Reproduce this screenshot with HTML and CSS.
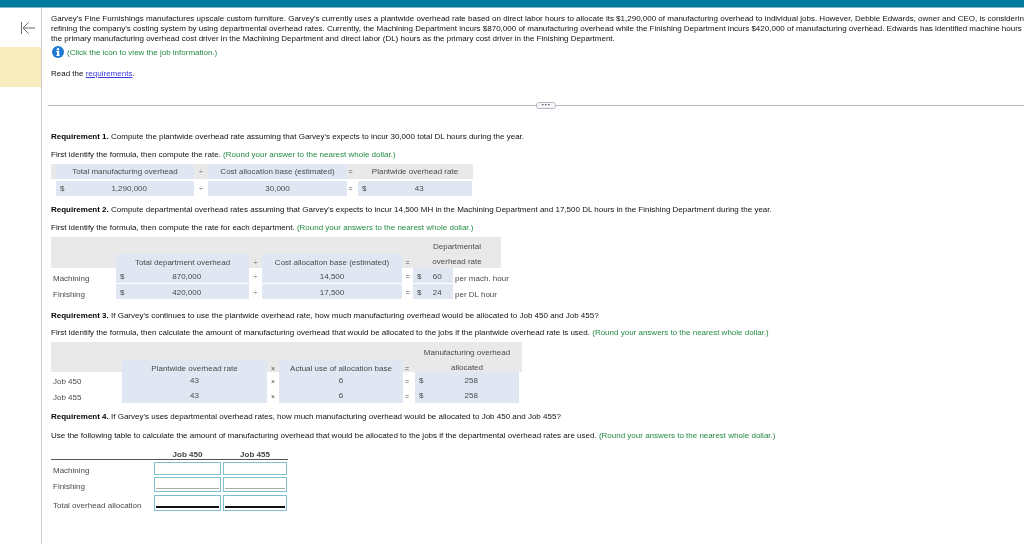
FILE: index.html
```html
<!DOCTYPE html>
<html lang="en">
<head>
<meta charset="utf-8">
<title>Garvey's Fine Furnishings</title>
<link rel="stylesheet" href="styles.css">
</head>
<body>
<div class="topbar"></div>
<div class="shell">
  <aside class="side">
    <svg class="back" width="16" height="14" viewBox="0 0 16 14"><path d="M1.500 1v12M15 7H3M8.500 1.500 3 7l5.500 5.500" fill="none" stroke="#6a6a6a" stroke-width="1"/></svg>
    <div class="flag"></div>
  </aside>
  <main class="main">
    <section class="intro">
      <div class="line">Garvey's Fine Furnishings manufactures upscale custom furniture. Garvey's currently uses a plantwide overhead rate based on direct labor hours to allocate its $1,290,000 of manufacturing overhead to individual jobs. However, Debbie Edwards, owner and CEO, is considering</div>
      <div class="line">refining the company's costing system by using departmental overhead rates. Currently, the Machining Department incurs $870,000 of manufacturing overhead while the Finishing Department incurs $420,000 of manufacturing overhead. Edwards has identified machine hours as</div>
      <div class="line">the primary manufacturing overhead cost driver in the Machining Department and direct labor (DL) hours as the primary cost driver in the Finishing Department.</div>
      <div class="info">
        <svg width="12" height="12" viewBox="0 0 12 12"><circle cx="6" cy="6" r="6" fill="#1f78d1"/><rect x="5" y="5" width="2.200" height="4.600" fill="#fff"/><rect x="4.200" y="5" width="1.500" height="1" fill="#fff"/><rect x="4.200" y="8.800" width="3.800" height="1" fill="#fff"/><circle cx="6" cy="3.200" r="1.200" fill="#fff"/></svg>
        <span class="hint">(Click the icon to view the job information.)</span>
      </div>
      <div class="line read">Read the <a class="link" href="#">requirements</a>.</div>
    </section>
    <div class="divider"><span class="pill">···</span></div>

    <p class="para p1"><b>Requirement 1.</b> Compute the plantwide overhead rate assuming that Garvey's expects to incur 30,000 total DL hours during the year.</p>
    <p class="para p-first">First identify the formula, then compute the rate. <span class="hint">(Round your answer to the nearest whole dollar.)</span></p>
    <div class="table t1">
      <div class="row gray r-h1">
        <span></span><span class="cell blue">Total manufacturing overhead</span><span class="cell op">÷</span><span class="cell blue">Cost allocation base (estimated)</span><span class="cell op">=</span><span class="cell">Plantwide overhead rate</span><span></span>
      </div>
      <div class="row r-b1">
        <span></span><span class="cell blue money"><i>$</i><em>1,290,000</em></span><span class="cell op">÷</span><span class="cell blue">30,000</span><span class="cell op">=</span><span class="cell blue money"><i>$</i><em>43</em></span><span></span>
      </div>
    </div>

    <p class="para p2"><b>Requirement 2.</b> Compute departmental overhead rates assuming that Garvey's expects to incur 14,500 MH in the Machining Department and 17,500 DL hours in the Finishing Department during the year.</p>
    <p class="para p-first">First identify the formula, then compute the rate for each department. <span class="hint">(Round your answers to the nearest whole dollar.)</span></p>
    <div class="table t2">
      <div class="row gray tall">
        <span></span><span class="cell blue end">Total department overhead</span><span class="cell op end">÷</span><span class="cell blue end">Cost allocation base (estimated)</span><span class="cell op end">=</span><span class="cell two">Departmental<br>overhead rate</span>
      </div>
      <div class="row r-b2">
        <span class="cell label">Machining</span><span class="cell blue money"><i>$</i><em>870,000</em></span><span class="cell op">÷</span><span class="cell blue">14,500</span><span class="cell op">=</span><span class="cell blue money"><i>$</i><em>60</em></span><span class="cell note">per mach. hour</span>
      </div>
      <div class="row r-b2">
        <span class="cell label">Finishing</span><span class="cell blue money"><i>$</i><em>420,000</em></span><span class="cell op">÷</span><span class="cell blue">17,500</span><span class="cell op">=</span><span class="cell blue money"><i>$</i><em>24</em></span><span class="cell note">per DL hour</span>
      </div>
    </div>

    <p class="para p3"><b>Requirement 3.</b> If Garvey's continues to use the plantwide overhead rate, how much manufacturing overhead would be allocated to Job 450 and Job 455?</p>
    <p class="para p-first3">First identify the formula, then calculate the amount of manufacturing overhead that would be allocated to the jobs if the plantwide overhead rate is used. <span class="hint">(Round your answers to the nearest whole dollar.)</span></p>
    <div class="table t3">
      <div class="row gray tall3">
        <span></span><span class="cell blue end">Plantwide overhead rate</span><span class="cell op end">×</span><span class="cell blue end">Actual use of allocation base</span><span class="cell op end">=</span><span class="cell two">Manufacturing overhead<br>allocated</span><span></span>
      </div>
      <div class="row r-b3">
        <span class="cell label">Job 450</span><span class="cell blue">43</span><span class="cell op">×</span><span class="cell blue">6</span><span class="cell op">=</span><span class="cell blue money"><i>$</i><em>258</em></span><span></span>
      </div>
      <div class="row r-b3">
        <span class="cell label">Job 455</span><span class="cell blue">43</span><span class="cell op">×</span><span class="cell blue">6</span><span class="cell op">=</span><span class="cell blue money"><i>$</i><em>258</em></span><span></span>
      </div>
    </div>

    <p class="para p4"><b>Requirement 4.</b> If Garvey's uses departmental overhead rates, how much manufacturing overhead would be allocated to Job 450 and Job 455?</p>
    <p class="para p-first4">Use the following table to calculate the amount of manufacturing overhead that would be allocated to the jobs if the departmental overhead rates are used. <span class="hint">(Round your answers to the nearest whole dollar.)</span></p>
    <div class="table t4">
      <div class="row4 head4"><span></span><b>Job 450</b><b>Job 455</b></div>
      <div class="row4 first4">
        <span class="cell label">Machining</span><span class="box"></span><span class="box"></span>
      </div>
      <div class="row4 second4">
        <span class="cell label">Finishing</span><span class="box single"></span><span class="box single"></span>
      </div>
      <div class="row4 third4">
        <span class="cell label">Total overhead allocation</span><span class="box total"></span><span class="box total"></span>
      </div>
    </div>
  </main>
</div>
</body>
</html>
```
FILE: styles.css
```css
* { box-sizing: border-box; }
html, body { margin: 0; height: 100%; overflow: hidden; background: #fff; }
body {
  font-family: "Liberation Sans", Arial, sans-serif;
  font-size: 8px;
  color: #111;
  display: flex;
  flex-direction: column;
}
.topbar { height: 8px; flex: none; background: #007a9e; border-bottom: 1px solid #7fb8cc; }
.shell { flex: 1; display: flex; min-height: 0; }
.side { width: 42px; flex: none; border-right: 1px solid #ccc; display: flex; flex-direction: column; }
.back { margin: 13px 0 0 20px; display: block; }
.flag { margin-top: 12px; height: 40px; background: #f9ecbd; }
.main { flex: 1; min-width: 0; padding: 6px 0 0 9px; overflow: hidden; filter: blur(0.3px); }
.intro { height: 91px; }
.line { white-space: nowrap; line-height: 10px; }
.info { display: flex; align-items: center; gap: 3px; margin: 2px 0 0 1px; height: 12px; }
.hint { color: #238a45; white-space: nowrap; }
.read { margin-top: 11px; }
.link { color: #3a3ae0; }
.divider { margin-left: -3px; height: 1px; background: #b9b9c6; position: relative; }
.pill {
  position: absolute; left: 488px; top: -3px; width: 20px; height: 7px;
  border: 1px solid #b9b9c6; border-radius: 3px; background: #f5f7f9;
  font-size: 9px; font-weight: bold; line-height: 4px; text-align: center; color: #444;
}
.para { margin: 0; white-space: nowrap; line-height: 10px; }
.para b { color: #000; }
.p1 { margin-top: 26px; }
.p-first { margin-top: 8px; }
.p2 { margin-top: 9px; }
.p3 { margin-top: 11px; }
.p-first3 { margin-top: 7px; }
.p4 { margin-top: 9px; }
.p-first4 { margin-top: 9px; }
.table { color: #4a4a4a; }
.row { display: grid; }
.cell { display: flex; align-items: center; justify-content: center; white-space: nowrap; }
.gray { background: #e9e9e9; }
.blue { background: #e1e7f2; }
.op { font-size: 7px; }
.end { align-self: end; height: 15px; padding-top: 1px; }
.money { justify-content: flex-start; padding-left: 4px; }
.money i { font-style: normal; }
.money em { font-style: normal; flex: 1; text-align: center; }
.label { justify-content: flex-start; padding: 4px 0 0 2px; }
.note { justify-content: flex-start; padding: 4px 0 0 2px; }
.two { display: block; text-align: center; line-height: 15px; padding-top: 2px; }
.t1 { width: 422px; margin-top: 4px; }
.t1 .row { grid-template-columns: 5px 138px 14px 139px 11px 114px 1px; }
.t1 .cell:nth-child(5), .t3 .cell:nth-child(5) { padding-right: 4px; }
.r-h1 { height: 15px; margin-bottom: 2px; }
.r-b1 { height: 15px; }
.t2 { width: 450px; margin-top: 4px; }
.t2 .row { grid-template-columns: 65px 133px 13px 140px 11px 40px 48px; }
.t2 .two { grid-column: span 2; }
.tall { height: 31px; }
.r-b2 { height: 16px; }
.r-b2 .blue { margin-bottom: 1px; padding-top: 1px; }
.t3 { width: 471px; margin-top: 4px; }
.t3 .row { grid-template-columns: 71px 145px 12px 124px 12px 104px 3px; }
.t3 .two { padding-top: 3px; }
.tall3 { height: 30px; }
.r-b3 { height: 15.5px; }
.r-b3 .blue { padding-top: 1px; }
.r-b3 .op { padding-top: 3px; }
.t4 { margin-top: 5px; width: 237px; }
.row4 { display: grid; grid-template-columns: 101px 67px 64px; column-gap: 2px; }
.row4 b { text-align: center; color: #444; }
.head4 { height: 14px; border-bottom: 1px solid #555; line-height: 8px; margin-bottom: 2px; align-items: end; }
.box { display: block; border: 1px solid #7fc0d0; background: #fff; }
.first4 { height: 13px; margin-bottom: 2px; }
.second4 { height: 15px; margin-bottom: 3px; }
.third4 { height: 16px; }
.single::after { content: ""; display: block; margin: 10px 1px 0; border-bottom: 1px solid #aaa; }
.total::after { content: ""; display: block; margin: 10px 1px 0; border-bottom: 2px solid #111; }
```
